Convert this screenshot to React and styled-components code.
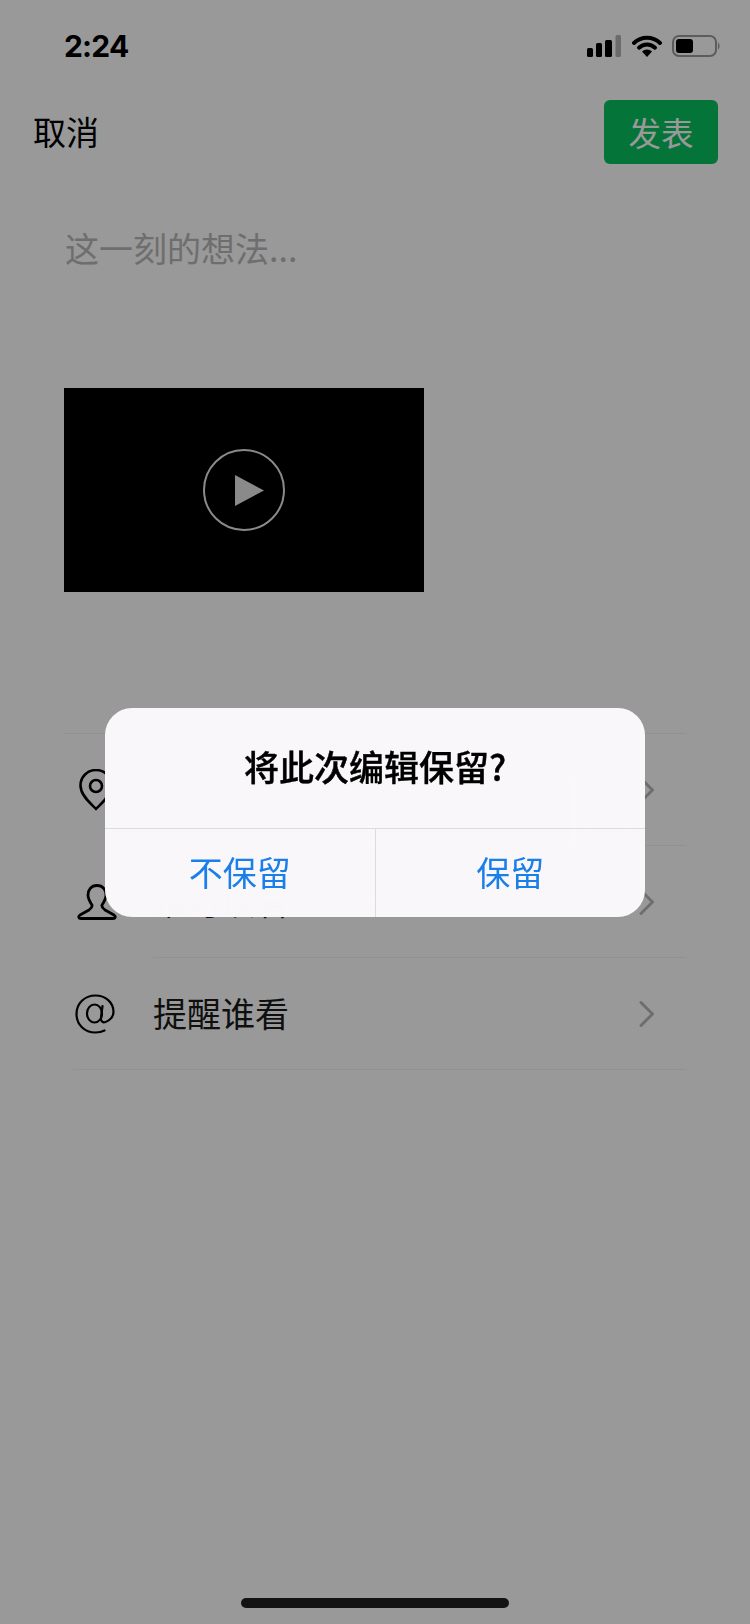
import React from "react";
import styled, { createGlobalStyle } from "styled-components";

const GlobalStyle = createGlobalStyle`
  html, body {
    margin: 0;
    padding: 0;
    background: #fff;
  }
  * {
    box-sizing: border-box;
  }
`;

const CJK = `"Noto Sans CJK SC", "Noto Sans", sans-serif`;

const Screen = styled.div`
  position: relative;
  width: 750px;
  height: 1624px;
  overflow: hidden;
  background: #fff;
  font-family: ${CJK};
  color: #000;
  display: flex;
  flex-direction: column;
`;

const StatusBar = styled.div`
  height: 100px;
  padding: 28px 30px 0 64px;
  display: flex;
  justify-content: space-between;
  align-items: flex-start;
`;

const Time = styled.div`
  font-family: "Inter", "Liberation Sans", sans-serif;
  font-weight: 700;
  font-size: 30px;
  line-height: 36px;
  letter-spacing: -0.8px;
`;

const StatusIcons = styled.div`
  margin-top: 7px;
  display: flex;
  align-items: center;
`;

const NavBar = styled.div`
  height: 64px;
  padding: 0 32px 0 33px;
  display: flex;
  justify-content: space-between;
  align-items: center;
`;

const Cancel = styled.div`
  font-size: 33px;
  line-height: 62px;
  height: 64px;
`;

const PublishButton = styled.div`
  width: 114px;
  height: 64px;
  padding-bottom: 2px;
  border-radius: 6px;
  background: #07c160;
  display: flex;
  align-items: center;
  justify-content: center;
  font-size: 32.5px;
  color: #fff;
`;

const Placeholder = styled.div`
  margin: 59px 0 0 65px;
  height: 50px;
  font-size: 34px;
  line-height: 50px;
  color: #b8b8b8;
`;

const VideoThumb = styled.div`
  margin: 115px 0 0 64px;
  width: 360px;
  height: 204px;
  background: #000;
  display: flex;
  align-items: center;
  justify-content: center;
`;

const OptionList = styled.div`
  margin: 141px 64px 0 64px;
  border-top: 1px solid #f2f2f2;
`;

const OptionRow = styled.div`
  height: 112px;
  margin-left: 89px;
  padding-bottom: 3px;
  border-bottom: 1px solid #f2f2f2;
  position: relative;
  display: flex;
  align-items: center;
  font-size: 34px;
  color: #1a1a1a;

  &:last-child {
    margin-left: 9px;
    padding-left: 80px;
  }
`;

const OptionIcon = styled.div`
  position: absolute;
  left: ${(props) => props.$left}px;
  top: 50%;
  transform: translateY(-50%);
  display: flex;
`;

const Chevron = styled.svg`
  position: absolute;
  right: 31px;
  top: 50%;
  transform: translateY(-50%);
`;

const HomeIndicator = styled.div`
  position: absolute;
  left: 241px;
  bottom: 16px;
  width: 268px;
  height: 10px;
  border-radius: 5px;
  background: #131313;
  z-index: 2;
`;

const Overlay = styled.div`
  position: absolute;
  inset: 0;
  background: rgba(0, 0, 0, 0.4);
  display: flex;
  align-items: center;
  justify-content: center;
`;

const Dialog = styled.div`
  width: 540px;
  height: 209px;
  border-radius: 27px;
  overflow: hidden;
  background: rgba(251, 249, 251, 0.985);
  backdrop-filter: blur(30px);
  display: flex;
  flex-direction: column;
`;

const DialogTitle = styled.div`
  height: 120px;
  display: flex;
  align-items: center;
  justify-content: center;
  font-size: 35px;
  font-weight: 500;
  -webkit-text-stroke: 0.4px #000;
  padding-bottom: 4px;
  color: #000;
`;

const DialogActions = styled.div`
  flex: 1;
  border-top: 1px solid #dcdbdd;
  display: flex;
`;

const DialogButton = styled.div`
  flex: 1;
  display: flex;
  align-items: center;
  justify-content: center;
  font-size: 34px;
  color: #1a7fe8;
  padding-bottom: 2px;

  & + & {
    border-left: 1px solid #dcdbdd;
  }
`;

const SignalIcon = () => (
  <svg width="34" height="22" viewBox="0 0 34 22">
    <rect x="0" y="13" width="6" height="9" rx="1.5" fill="#000" />
    <rect x="9" y="8" width="6" height="14" rx="1.5" fill="#000" />
    <rect x="18" y="5" width="7" height="17" rx="1.5" fill="#000" />
    <rect x="28.5" y="0" width="5.5" height="22" rx="1.5" fill="#000" opacity="0.3" />
  </svg>
);

const WifiIcon = () => (
  <svg width="30" height="22" viewBox="0 0 30 22" style={{ marginLeft: 11 }}>
    <path d="M2 8 A19 19 0 0 1 28 8" fill="none" stroke="#000" strokeWidth="4" strokeLinecap="round" />
    <path d="M7 12.7 A11.5 11.5 0 0 1 23 12.7" fill="none" stroke="#000" strokeWidth="4" strokeLinecap="round" />
    <path d="M10 16.5 A7 7 0 0 1 20 16.5 L15 22 Z" fill="#000" />
  </svg>
);

const BatteryIcon = () => (
  <svg width="48" height="22" viewBox="0 0 48 22" style={{ marginLeft: 10 }}>
    <rect x="1" y="1" width="43" height="20" rx="6" fill="none" stroke="#000" strokeOpacity="0.4" strokeWidth="2" />
    <rect x="4" y="4" width="17" height="14" rx="3" fill="#000" />
    <path d="M46 7.5 C48 8.5 48 13.5 46 14.5 Z" fill="#000" fillOpacity="0.4" />
  </svg>
);

const PlayIcon = () => (
  <svg width="82" height="82" viewBox="0 0 82 82">
    <circle cx="41" cy="41" r="40" fill="none" stroke="#e6e6e6" strokeWidth="2" />
    <path d="M32 26 L61 41.5 L32 57 Z" fill="#e6e6e6" />
  </svg>
);

const PinIcon = () => (
  <svg width="36" height="42" viewBox="0 0 36 42">
    <path
      d="M18 40 C14 35.5 2.5 27 2.5 16.5 A15.5 15.5 0 0 1 33.5 16.5 C33.5 27 22 35.5 18 40 Z"
      fill="none"
      stroke="#000"
      strokeWidth="2.6"
      strokeLinejoin="round"
    />
    <circle cx="18" cy="17" r="6" fill="none" stroke="#000" strokeWidth="2.6" />
  </svg>
);

const UserIcon = () => (
  <svg width="40" height="36" viewBox="0 0 40 36">
    <path
      d="M20 1.5 C14 1.5 11 6 11 11 C11 15 13 18 15 21 C15.5 23 14 24.5 12 26 L3 31 C1 32.5 1.5 34.5 4 34.5 L36 34.5 C38.5 34.5 39 32.5 37 31 L28 26 C26 24.5 24.5 23 25 21 C27 18 29 15 29 11 C29 6 26 1.5 20 1.5 Z"
      fill="none"
      stroke="#000"
      strokeWidth="2.8"
      strokeLinejoin="round"
    />
  </svg>
);

const AtIcon = () => (
  <svg width="40" height="40" viewBox="0 0 40 40">
    <path
      d="M27.5 12 L26 24 C25.6 27.5 28 29 30.5 28 C35 26.5 38.5 22.5 38.5 18 C38.5 8.5 30.5 1.5 20.5 1.5 C9.5 1.5 1.5 9.5 1.5 20 C1.5 30.5 9.5 38.5 20.5 38.5 C24 38.5 27 37.8 29.5 36.5"
      fill="none"
      stroke="#000"
      strokeWidth="2.2"
      strokeLinecap="round"
    />
    <ellipse cx="19.5" cy="19.5" rx="7.5" ry="9" fill="none" stroke="#000" strokeWidth="2.2" />
  </svg>
);

const RowChevron = () => (
  <Chevron width="16" height="27" viewBox="0 0 16 27">
    <path d="M2 2 L13.5 13.5 L2 25" fill="none" stroke="#b8b8b8" strokeWidth="3" strokeLinecap="round" strokeLinejoin="round" />
  </Chevron>
);

const options = [
  { label: "所在位置", icon: <PinIcon />, left: -75 },
  { label: "谁可以看", icon: <UserIcon />, left: -76 },
  { label: "提醒谁看", icon: <AtIcon />, left: 2 },
];

const App = () => {
  return (
    <Screen>
      <GlobalStyle />
      <StatusBar>
        <Time>2:24</Time>
        <StatusIcons>
          <SignalIcon />
          <WifiIcon />
          <BatteryIcon />
        </StatusIcons>
      </StatusBar>
      <NavBar>
        <Cancel>取消</Cancel>
        <PublishButton>发表</PublishButton>
      </NavBar>
      <Placeholder>这一刻的想法...</Placeholder>
      <VideoThumb>
        <PlayIcon />
      </VideoThumb>
      <OptionList>
        {options.map((option) => (
          <OptionRow key={option.label}>
            <OptionIcon $left={option.left}>{option.icon}</OptionIcon>
            {option.label}
            <RowChevron />
          </OptionRow>
        ))}
      </OptionList>
      <Overlay>
        <Dialog>
          <DialogTitle>将此次编辑保留?</DialogTitle>
          <DialogActions>
            <DialogButton>不保留</DialogButton>
            <DialogButton>保留</DialogButton>
          </DialogActions>
        </Dialog>
      </Overlay>
      <HomeIndicator />
    </Screen>
  );
};

export default App;
